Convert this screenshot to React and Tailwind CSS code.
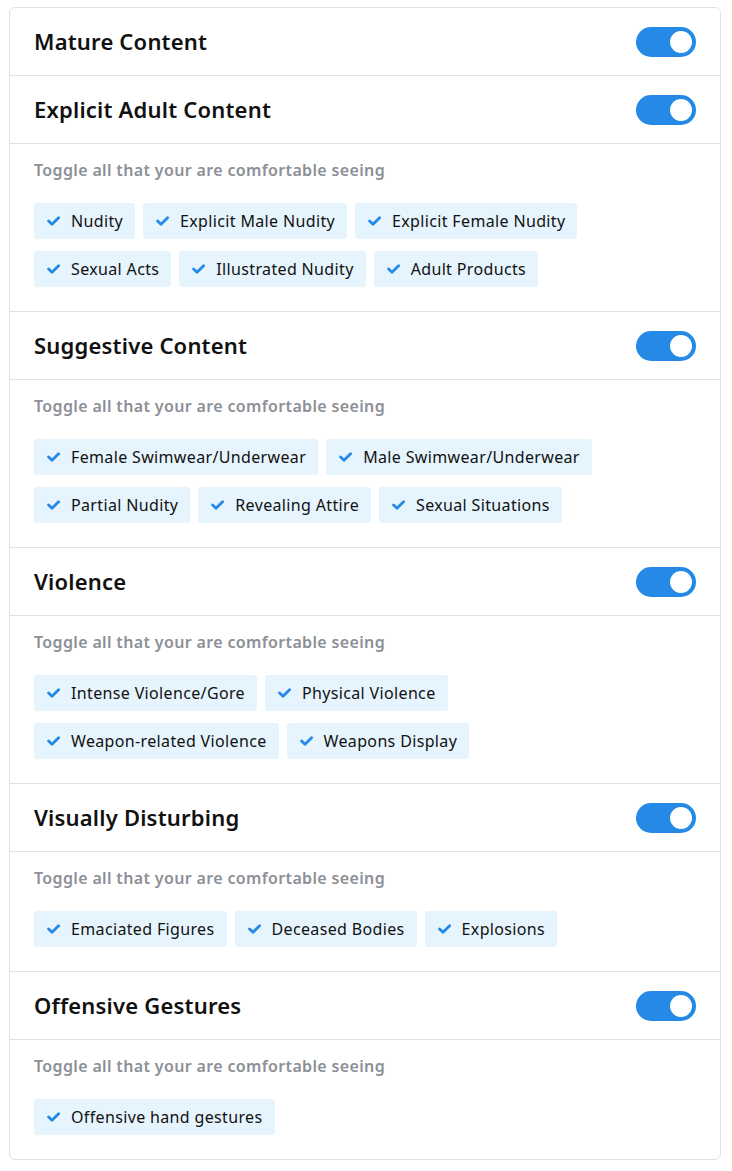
import React from "react";

const sections = [
  { title: "Mature Content", items: null },
  { title: "Explicit Adult Content", items: ["Nudity", "Explicit Male Nudity", "Explicit Female Nudity", "Sexual Acts", "Illustrated Nudity", "Adult Products"] },
  { title: "Suggestive Content", items: ["Female Swimwear/Underwear", "Male Swimwear/Underwear", "Partial Nudity", "Revealing Attire", "Sexual Situations"] },
  { title: "Violence", items: ["Intense Violence/Gore", "Physical Violence", "Weapon-related Violence", "Weapons Display"] },
  { title: "Visually Disturbing", items: ["Emaciated Figures", "Deceased Bodies", "Explosions"] },
  { title: "Offensive Gestures", items: ["Offensive hand gestures"] },
];

function Toggle() {
  return (
    <div className="w-[60px] h-[30px] rounded-full bg-[#2589e6] flex items-center justify-end pr-[4px]">
      <div className="w-[22px] h-[22px] rounded-full bg-white" />
    </div>
  );
}

function Check() {
  return (
    <svg width="13" height="10" viewBox="0 0 13 10" fill="none">
      <path d="M1.6 5 L5 8.2 L11.6 1.8" stroke="#2589e6" strokeWidth="2.8" strokeLinecap="round" strokeLinejoin="round" />
    </svg>
  );
}

function Chip({ label }) {
  return (
    <div className="h-[36px] rounded-[3px] bg-[#e6f4fd] flex items-center pl-[13px] pr-[12px] gap-[11px] text-[16px] tracking-[0.35px] text-[#111]">
      <Check />
      <span>{label}</span>
    </div>
  );
}

export default function App() {
  return (
    <div className="bg-white min-h-[1171px] pt-[7px] px-[9px] pb-[12px]" style={{ fontFamily: '"Segoe UI", "Noto Sans", "Open Sans", sans-serif' }}>
      <div className="border border-[#dfe1e5] rounded-[6px] w-[712px]">
        {sections.map((s, i) => (
          <div key={s.title} className={i > 0 ? "border-t border-[#dfe1e5]" : ""}>
            <div className="h-[67px] flex items-center justify-between pl-[24px] pr-[24px]">
              <h2 className="text-[22px] font-semibold text-[#111] tracking-[0.2px]">{s.title}</h2>
              <Toggle />
            </div>
            {s.items && (
              <div className="border-t border-[#dfe1e5] pt-[14px] pb-[24px] px-[24px]">
                <div className="text-[16px] leading-6 font-semibold tracking-[0.35px] text-[#8c9097]">Toggle all that your are comfortable seeing</div>
                <div className="mt-[21px] flex flex-wrap gap-x-[8px] gap-y-[12px]">
                  {s.items.map((it) => (
                    <Chip key={it} label={it} />
                  ))}
                </div>
              </div>
            )}
          </div>
        ))}
      </div>
    </div>
  );
}
